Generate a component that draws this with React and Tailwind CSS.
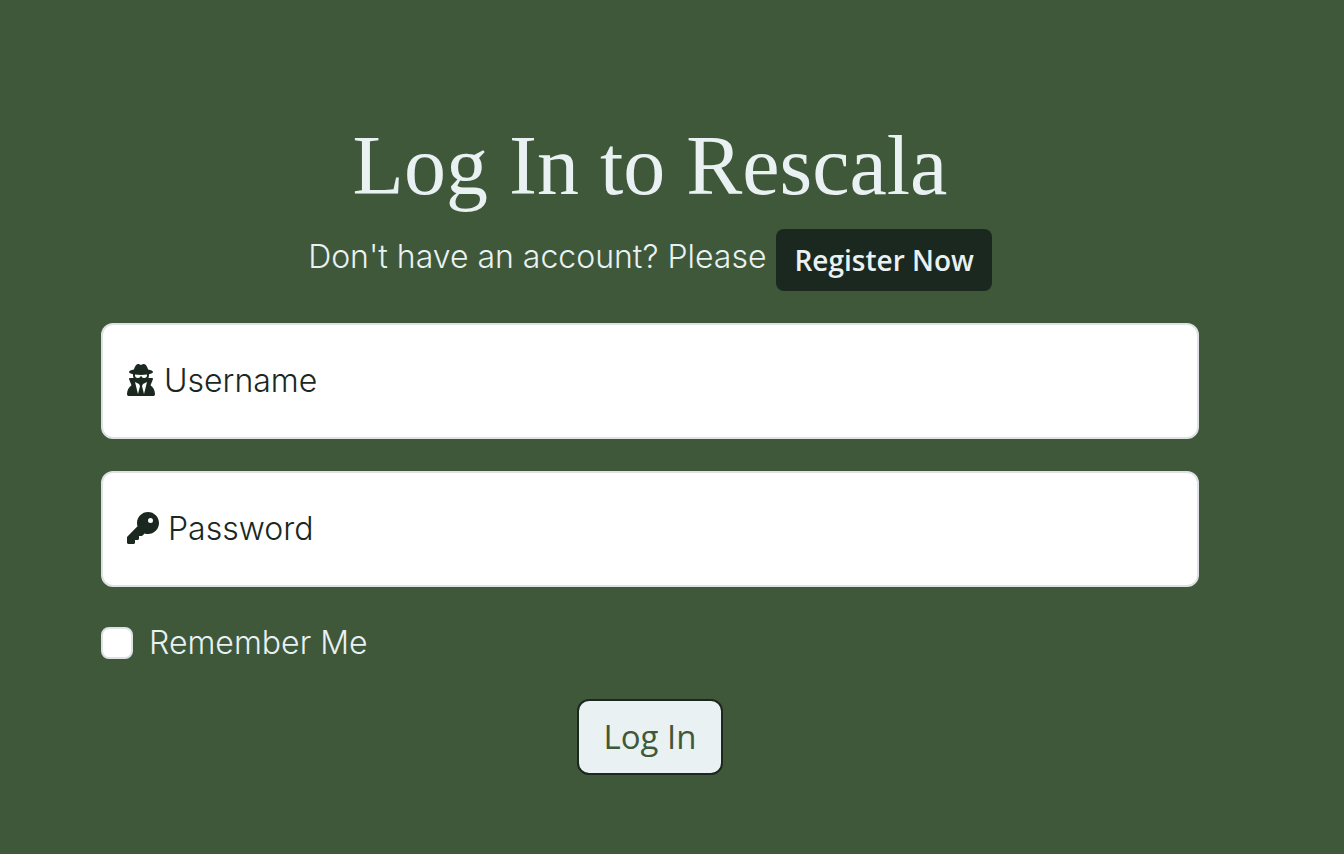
import { FaKey, FaUserSecret } from "react-icons/fa6";

function Field({ id, type, label, icon: Icon, iconClass, autoComplete }) {
  return (
    <div className="relative">
      <input
        id={id}
        name={id}
        type={type}
        placeholder=" "
        autoComplete={autoComplete}
        className="peer block h-[116px] w-full rounded-xl border-2 border-[#dee2e6] bg-white px-6 text-[32px] text-[#1a281f] outline-none"
      />
      <label
        htmlFor={id}
        className="pointer-events-none absolute top-0 bottom-[2px] left-[26px] flex items-center gap-[9px] text-[32px] font-light text-[#1a281f] peer-[:not(:placeholder-shown)]:hidden"
      >
        <Icon aria-hidden="true" className={iconClass} />
        <span className="pt-[2px]">{label}</span>
      </label>
    </div>
  );
}

export default function App() {
  return (
    <main className="min-h-screen bg-[#3f5839] pt-[118px] pr-[145px] pb-20 pl-[101px] font-['Inter',sans-serif] text-[#e9f1f3]">
      <h1 className="text-center font-['Liberation_Serif',serif] text-[84px] leading-[96px]">
        Log In to Rescala
      </h1>
      <div className="mt-[15px] flex items-start justify-center gap-[10px]">
        <p className="text-[32px] leading-[56px] font-light">Don't have an account? Please</p>
        <a
          href="#register"
          className="flex h-[62px] items-center rounded-lg bg-[#1a281f] px-[18px] font-['Open_Sans',sans-serif] text-[28px] font-semibold"
        >
          Register Now
        </a>
      </div>
      <form className="mt-8 flex flex-col gap-8" onSubmit={(e) => e.preventDefault()}>
        <Field id="username" type="text" label="Username" icon={FaUserSecret} iconClass="h-8 w-7" autoComplete="username" />
        <Field id="password" type="password" label="Password" icon={FaKey} iconClass="size-8" autoComplete="current-password" />
        <div className="flex h-12 items-center gap-4">
          <input
            id="remember"
            type="checkbox"
            className="size-8 appearance-none rounded-lg border-2 border-[#dee2e6] bg-white checked:bg-[#1a281f]"
          />
          <label htmlFor="remember" className="text-[32px] leading-[48px] font-light">
            Remember Me
          </label>
        </div>
        <button
          type="submit"
          className="h-[76px] self-center rounded-xl border-2 border-[#1a281f] bg-[#e9f1f3] px-6 font-['Open_Sans',sans-serif] text-[33px] font-medium text-[#3f5839]"
        >
          Log In
        </button>
      </form>
    </main>
  );
}
